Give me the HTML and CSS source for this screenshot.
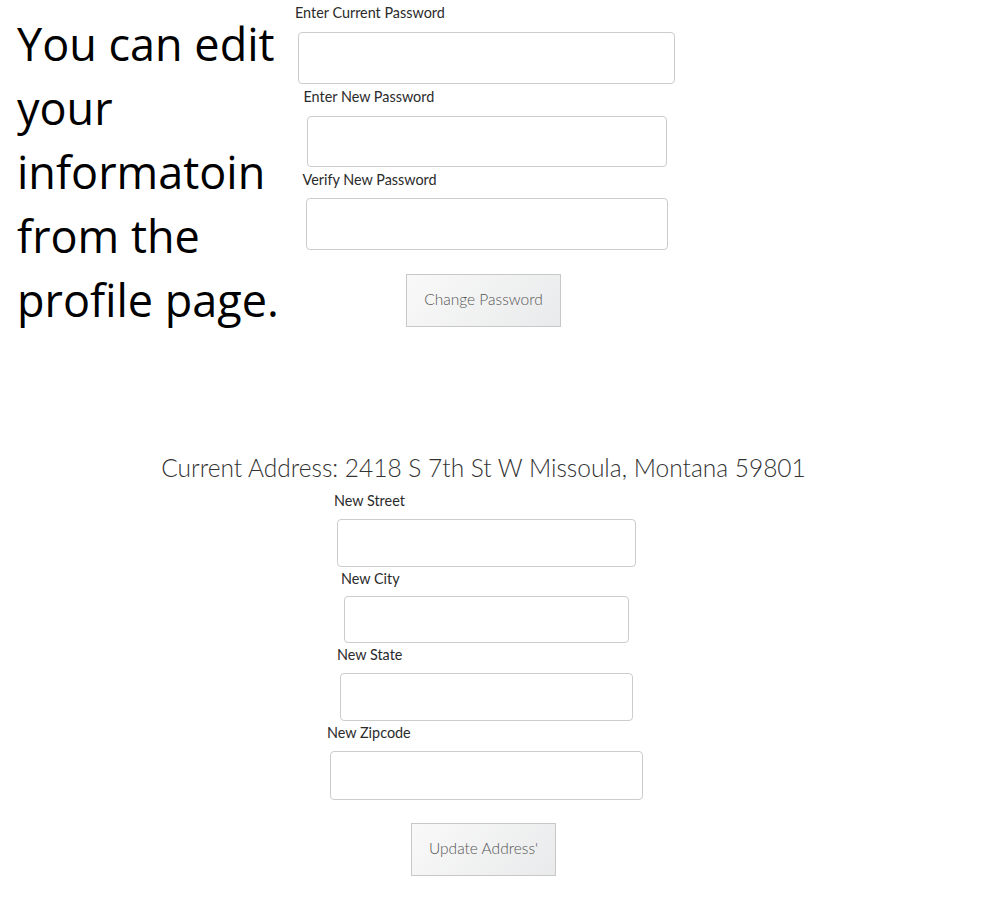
FILE: index.html
```html
<!DOCTYPE html>
<html lang="en">
<head>
<meta charset="utf-8">
<title>Profile</title>
<link rel="stylesheet" href="styles.css">
</head>
<body>
<div class="page">
  <section class="top">
    <p class="intro">You can edit your informatoin from the profile page.</p>
    <form class="form">
      <div class="group group--pw1">
        <label class="label">Enter Current Password</label>
        <input class="field field--pw1" type="password">
      </div>
      <div class="group group--pw2">
        <label class="label">Enter New Password</label>
        <input class="field field--pw2" type="password">
      </div>
      <div class="group group--pw3">
        <label class="label label--tight">Verify New Password</label>
        <input class="field field--pw3" type="password">
      </div>
      <button class="btn btn--pw" type="button">Change Password</button>
    </form>
    <div class="spacer"></div>
  </section>

  <section class="address">
    <h2 class="address-title">Current Address: 2418 S 7th St W Missoula, Montana 59801</h2>
    <form class="form">
      <div class="group group--street">
        <label class="label">New Street</label>
        <input class="field field--street" type="text">
      </div>
      <div class="group group--city">
        <label class="label">New City</label>
        <input class="field field--city" type="text">
      </div>
      <div class="group group--state">
        <label class="label">New State</label>
        <input class="field field--state" type="text">
      </div>
      <div class="group group--zip">
        <label class="label">New Zipcode</label>
        <input class="field field--zip" type="text">
      </div>
      <button class="btn btn--addr" type="button">Update Address'</button>
    </form>
  </section>
</div>
</body>
</html>
```

FILE: styles.css
```css
html, body {
  margin: 0;
  padding: 0;
  background: #ffffff;
}

.page {
  width: 967px;
  font-family: "Lato", "Open Sans", sans-serif;
  color: #333333;
}

.top {
  display: grid;
  grid-template-columns: 283px 1fr 283px;
}

.intro {
  margin: 12px 0 0 0;
  padding-left: 17px;
  font-family: "Open Sans", "Noto Sans", sans-serif;
  font-size: 45px;
  line-height: 64px;
  color: #000000;
}

.form {
  display: flex;
  flex-direction: column;
  align-items: center;
  margin: 0;
}

.group {
  display: flex;
  flex-direction: column;
  align-items: flex-start;
  margin-left: 6px;
}

.label {
  display: block;
  margin-left: -3px;
  margin-bottom: 9px;
  font-size: 14.4px;
  line-height: 20px;
  color: #2b2b2b;
}

.label--tight {
  margin-bottom: 8px;
}

.group--street .label,
.group--state .label,
.group--zip .label {
  margin-bottom: 8px;
}

.group--city .label {
  margin-bottom: 7px;
}

.field {
  box-sizing: border-box;
  display: block;
  border: 1px solid #cccccc;
  border-radius: 4px;
  background: #ffffff;
  padding: 6px 12px;
  font: inherit;
}

.group--pw1 { padding-top: 3px; }
.group--pw2, .group--pw3 { margin-top: 3px; }

.field--pw1 { width: 377px; height: 52px; }
.field--pw2 { width: 360px; height: 51px; }
.field--pw3 { width: 362px; height: 52px; }

.group--street { margin-top: 6px; }
.group--city, .group--state, .group--zip { margin-top: 2px; }

.field--street { width: 299px; height: 48px; }
.field--city { width: 285px; height: 47px; }
.field--state { width: 293px; height: 48px; }
.field--zip { width: 313px; height: 49px; }

.btn {
  box-sizing: border-box;
  height: 53px;
  padding: 0 0 4px 0;
  border: 1px solid #c8c8c8;
  border-radius: 0;
  background: linear-gradient(135deg, #f9f9f9 0%, #e9eaeb 100%);
  font-family: "Lato", "Open Sans", sans-serif;
  font-size: 15.5px;
  font-weight: 300;
  color: #555555;
}

.btn--pw { margin-top: 24px; width: 155px; }
.btn--addr { margin-top: 23px; width: 145px; }

.address {
  padding-top: 119px;
  padding-bottom: 40px;
}

.address-title {
  margin: 0;
  text-align: center;
  font-size: 24.5px;
  line-height: 34px;
  font-weight: 300;
  color: #333333;
}
```
